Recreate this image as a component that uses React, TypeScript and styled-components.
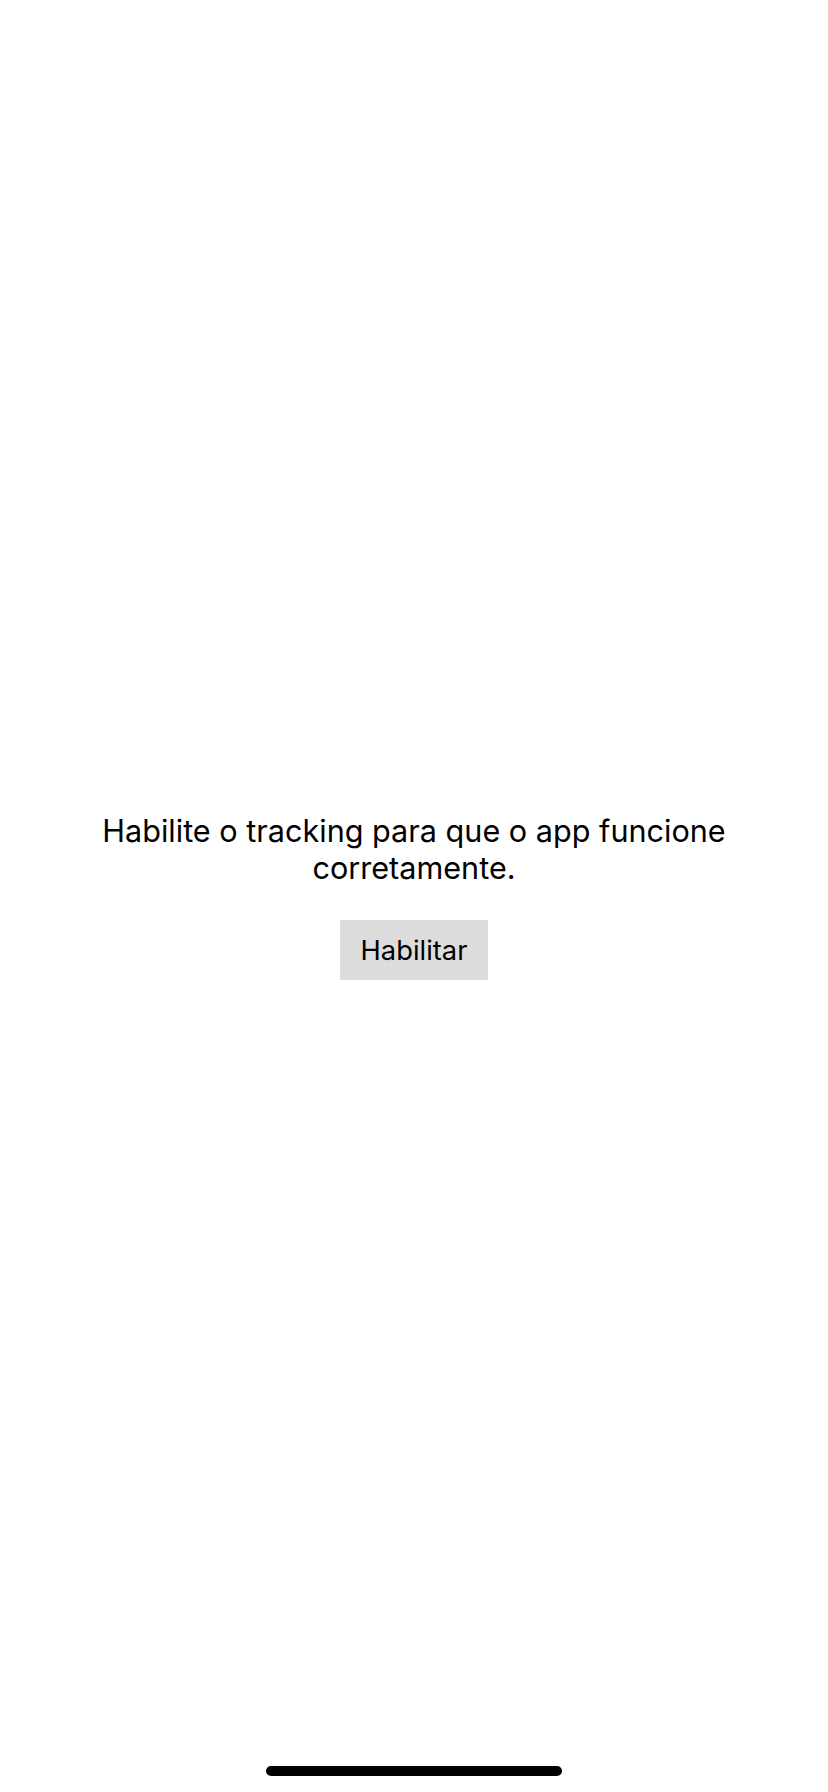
import React from "react";
import styled, { createGlobalStyle } from "styled-components";

const GlobalStyle = createGlobalStyle`
  html, body { margin: 0; padding: 0; background: #ffffff; }
  body { font-family: Inter, "Noto Sans", sans-serif; color: #000; }
`;

const Screen = styled.div`
  position: relative;
  width: 828px;
  height: 1792px;
  display: flex;
  flex-direction: column;
  align-items: center;
  justify-content: center;
  background: #ffffff;
`;

const Message = styled.p`
  margin: 0;
  width: 660px;
  font-size: 30.6px;
  line-height: 37px;
  text-align: center;
  letter-spacing: 0;
`;

const Button = styled.button`
  margin-top: 34px;
  width: 148px;
  height: 60px;
  border: none;
  border-radius: 0;
  background: #dcdcdc;
  font-family: Inter, "Noto Sans", sans-serif;
  font-size: 27.3px;
  color: #000;
  padding: 0;
`;

const HomeIndicator = styled.div`
  position: absolute;
  left: 266px;
  bottom: 16px;
  width: 296px;
  height: 10px;
  border-radius: 5px;
  background: #000;
`;

export default function App() {
  return (
    <>
      <GlobalStyle />
      <Screen>
        <Message>Habilite o tracking para que o app funcione corretamente.</Message>
        <Button>Habilitar</Button>
        <HomeIndicator />
      </Screen>
    </>
  );
}
